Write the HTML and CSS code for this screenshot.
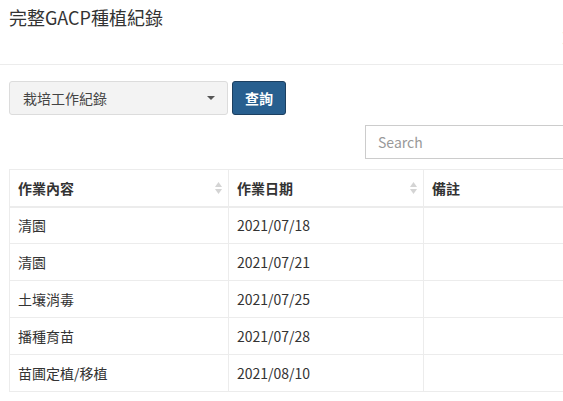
FILE: index.html
```html
<!DOCTYPE html>
<html lang="zh-Hant">
<head>
<meta charset="utf-8">
<title>完整GACP種植紀錄</title>
<link rel="stylesheet" href="styles.css">
</head>
<body>
<div class="page">
  <div class="modal-header">
    <h4 class="title">完整GACP種植紀錄</h4>
    <span class="close">×</span>
  </div>
  <div class="modal-body">
    <div class="query">
      <div class="select">
        <span>栽培工作紀錄</span>
        <span class="caret"></span>
      </div>
      <button class="btn">查詢</button>
    </div>
    <div class="search-row">
      <div class="search">Search</div>
    </div>
    <table class="grid">
      <thead>
        <tr>
          <th class="c1"><div class="th">作業內容<svg class="sort" width="7" height="12" viewBox="0 0 7 12"><path d="M3.5 0L7 5H0z" fill="#d4d4d4"/><path d="M3.5 12L7 7H0z" fill="#d4d4d4"/></svg></div></th>
          <th class="c2"><div class="th">作業日期<svg class="sort" width="7" height="12" viewBox="0 0 7 12"><path d="M3.5 0L7 5H0z" fill="#d4d4d4"/><path d="M3.5 12L7 7H0z" fill="#d4d4d4"/></svg></div></th>
          <th class="c3">備註</th>
        </tr>
      </thead>
      <tbody>
        <tr><td>清園</td><td>2021/07/18</td><td></td></tr>
        <tr><td>清園</td><td>2021/07/21</td><td></td></tr>
        <tr><td>土壤消毒</td><td>2021/07/25</td><td></td></tr>
        <tr><td>播種育苗</td><td>2021/07/28</td><td></td></tr>
        <tr><td>苗圃定植/移植</td><td>2021/08/10</td><td></td></tr>
      </tbody>
    </table>
  </div>
</div>
</body>
</html>
```
FILE: styles.css
```css
html, body {
  margin: 0;
  padding: 0;
  overflow: hidden;
  background: #fff;
}
body {
  font-family: "Noto Sans CJK TC", "Noto Sans", sans-serif;
  font-size: 14px;
  color: #333;
}
.page {
  width: 760px;
  position: relative;
}
.modal-header {
  height: 65px;
  border-bottom: 1px solid #ececec;
  box-sizing: border-box;
  padding: 4px 9px 0;
}
.title {
  margin: 0;
  font-size: 18px;
  font-weight: 400;
  line-height: 26px;
  color: #333;
}
.close {
  position: absolute;
  left: 559px;
  top: 27px;
  font-size: 21px;
  font-weight: 700;
  line-height: 1;
  color: #000;
  opacity: 0.2;
}
.modal-body {
  padding: 16px 9px;
}
.query {
  display: flex;
  gap: 4px;
  height: 34px;
}
.select {
  width: 219px;
  box-sizing: border-box;
  border: 1px solid #dcdcdc;
  border-radius: 3px;
  background: #f3f3f3;
  display: flex;
  align-items: center;
  justify-content: space-between;
  padding: 0 12px 0 13px;
  color: #444;
}
.caret {
  width: 0;
  height: 0;
  border-left: 4px solid transparent;
  border-right: 4px solid transparent;
  border-top: 4px solid #555;
}
.btn {
  width: 54px;
  box-sizing: border-box;
  border: 1px solid #1c3f60;
  border-radius: 3px;
  background: #285f8f;
  color: #fff;
  font-family: inherit;
  font-size: 14px;
  font-weight: 700;
  padding: 0;
}
.search-row {
  padding-top: 10px;
  padding-left: 356px;
  height: 34px;
  margin-bottom: 10px;
}
.search {
  width: 260px;
  height: 34px;
  box-sizing: border-box;
  border: 1px solid #ccc;
  padding: 0 12px;
  line-height: 32px;
  color: #999;
}
.grid {
  border-collapse: collapse;
  width: 700px;
  border: 1px solid #ececec;
  table-layout: fixed;
}
.grid th, .grid td {
  border: 1px solid #ececec;
  height: 37px;
  padding: 0 8px;
  text-align: left;
  box-sizing: border-box;
}
.grid th {
  font-weight: 700;
  border-bottom-width: 2px;
}
.c1 { width: 219px; }
.c2 { width: 195px; }
.th {
  display: flex;
  align-items: center;
  justify-content: space-between;
}
.sort {
  margin-right: -2px;
}
```
